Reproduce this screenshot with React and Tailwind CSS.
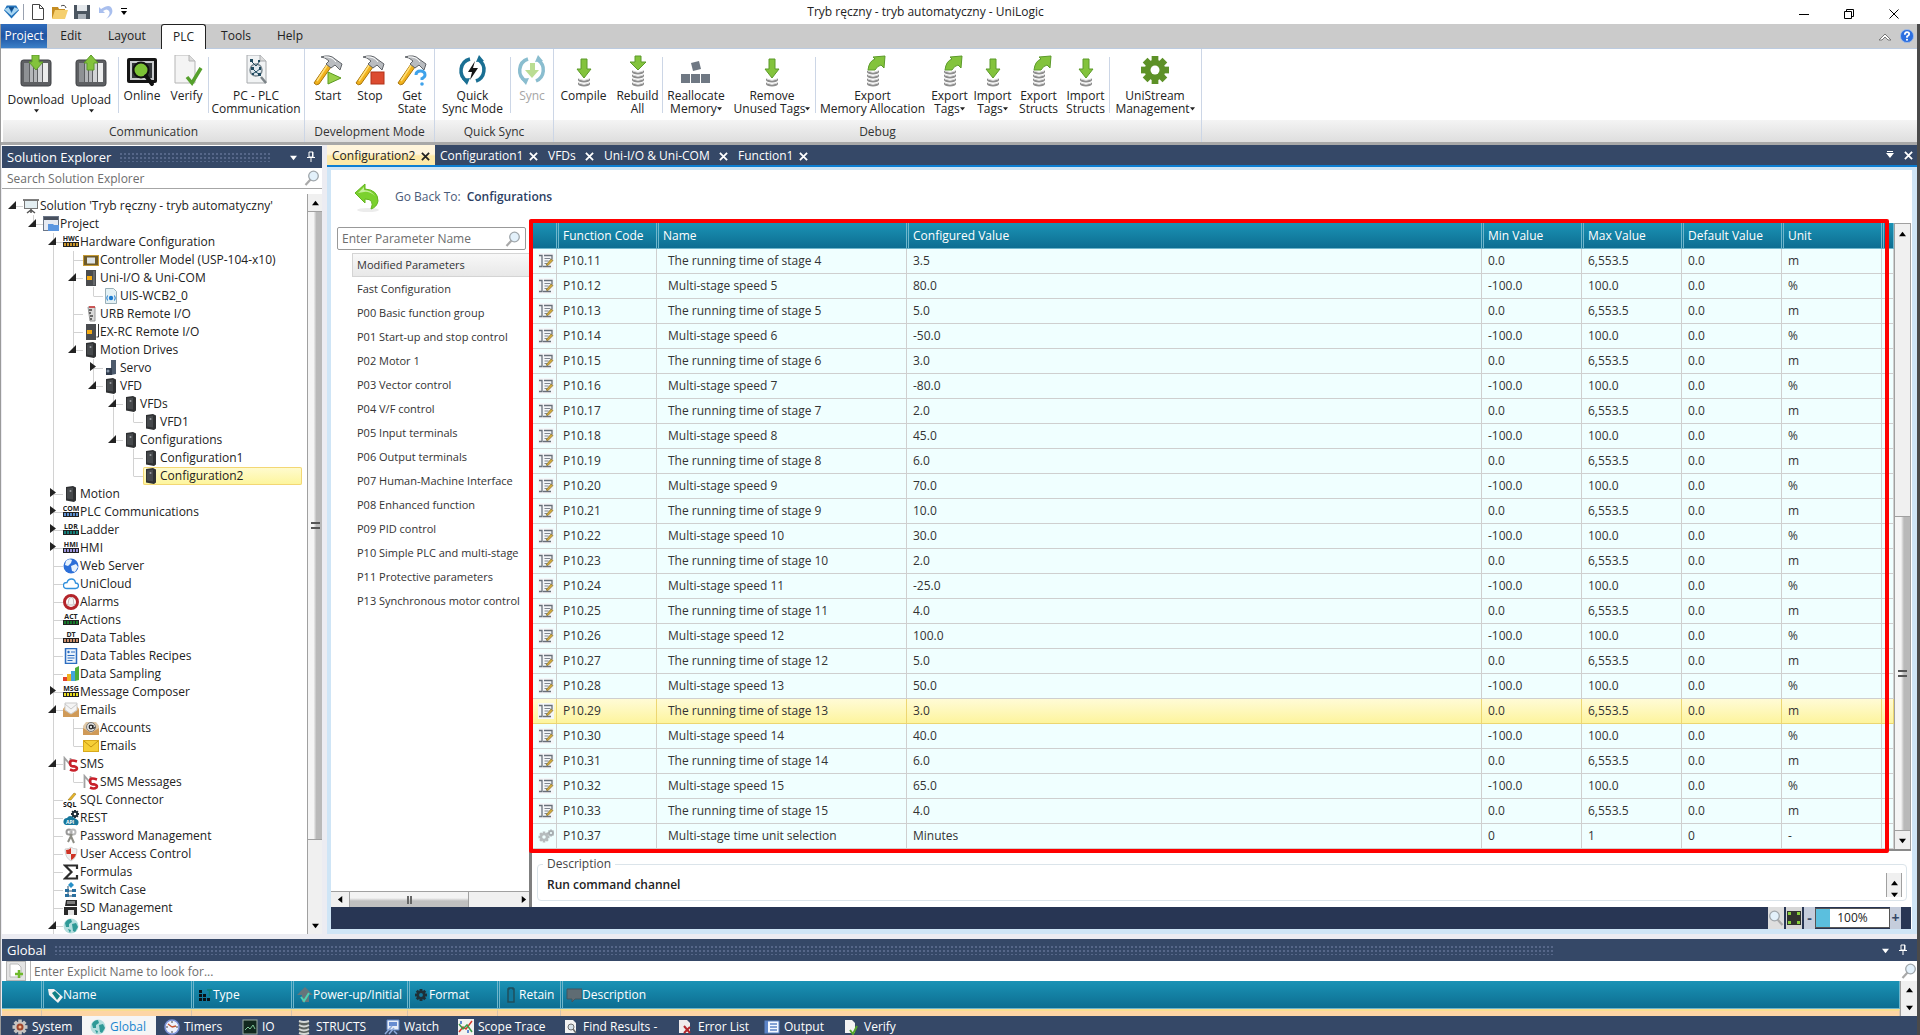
import React, { useState } from 'react'
import clsx from 'clsx'

const TREE = [
  { depth: 0, label: "Solution 'Tryb ręczny - tryb automatyczny'", icon: 'solution', state: 'open' },
  { depth: 1, label: 'Project', icon: 'project', state: 'open' },
  { depth: 2, label: 'Hardware Configuration', icon: 'tag', tag: 'HWC', color: '#c9962c', state: 'open' },
  { depth: 3, label: 'Controller Model (USP-104-x10)', icon: 'controller' },
  { depth: 3, label: 'Uni-I/O & Uni-COM', icon: 'module', state: 'open' },
  { depth: 4, label: 'UIS-WCB2_0', icon: 'page' },
  { depth: 3, label: 'URB Remote I/O', icon: 'urb' },
  { depth: 3, label: 'EX-RC Remote I/O', icon: 'exrc' },
  { depth: 3, label: 'Motion Drives', icon: 'drive', state: 'open' },
  { depth: 4, label: 'Servo', icon: 'servo', state: 'closed' },
  { depth: 4, label: 'VFD', icon: 'drive', state: 'open' },
  { depth: 5, label: 'VFDs', icon: 'drive', state: 'open' },
  { depth: 6, label: 'VFD1', icon: 'drive' },
  { depth: 5, label: 'Configurations', icon: 'drive', state: 'open' },
  { depth: 6, label: 'Configuration1', icon: 'drive' },
  { depth: 6, label: 'Configuration2', icon: 'drive', selected: true },
  { depth: 2, label: 'Motion', icon: 'drive', state: 'closed' },
  { depth: 2, label: 'PLC Communications', icon: 'tag', tag: 'COM', color: '#5b8fd0', state: 'closed' },
  { depth: 2, label: 'Ladder', icon: 'tag', tag: 'LDR', color: '#16807a', state: 'closed' },
  { depth: 2, label: 'HMI', icon: 'tag', tag: 'HMI', color: '#9c94dc', state: 'closed' },
  { depth: 2, label: 'Web Server', icon: 'web' },
  { depth: 2, label: 'UniCloud', icon: 'cloud' },
  { depth: 2, label: 'Alarms', icon: 'alarm' },
  { depth: 2, label: 'Actions', icon: 'tag', tag: 'ACT', color: '#177a2b' },
  { depth: 2, label: 'Data Tables', icon: 'tag', tag: 'DT', color: '#cc8f6c' },
  { depth: 2, label: 'Data Tables Recipes', icon: 'recipe' },
  { depth: 2, label: 'Data Sampling', icon: 'sampling' },
  { depth: 2, label: 'Message Composer', icon: 'tag', tag: 'MSG', color: '#e8dc1e', state: 'closed' },
  { depth: 2, label: 'Emails', icon: 'mailbox', state: 'open' },
  { depth: 3, label: 'Accounts', icon: 'account' },
  { depth: 3, label: 'Emails', icon: 'mail' },
  { depth: 2, label: 'SMS', icon: 'sms', state: 'open' },
  { depth: 3, label: 'SMS Messages', icon: 'sms' },
  { depth: 2, label: 'SQL Connector', icon: 'sql' },
  { depth: 2, label: 'REST', icon: 'rest' },
  { depth: 2, label: 'Password Management', icon: 'keys' },
  { depth: 2, label: 'User Access Control', icon: 'shield' },
  { depth: 2, label: 'Formulas', icon: 'sigma' },
  { depth: 2, label: 'Switch Case', icon: 'switch' },
  { depth: 2, label: 'SD Management', icon: 'sd' },
  { depth: 2, label: 'Languages', icon: 'globe', state: 'open' },
]

const RIBBON = [
  {
    caption: 'Communication',
    className: 'w-[301px] pl-[5px]',
    items: [
      { lines: ['Download'], icon: 'download', width: 'w-14', menu: true },
      { lines: ['Upload'], icon: 'upload', width: 'w-[54px]', menu: true },
      null,
      { lines: ['Online'], icon: 'online', width: 'w-[46px]' },
      { lines: ['Verify'], icon: 'verify', width: 'w-[43px]' },
      null,
      { lines: ['PC - PLC', 'Communication'], icon: 'pcplc', width: 'w-[94px]' },
    ],
  },
  {
    caption: 'Development Mode',
    className: 'w-[129px] pl-0.5',
    items: [
      { lines: ['Start'], icon: 'start', width: 'w-[42px]' },
      { lines: ['Stop'], icon: 'stop', width: 'w-[42px]' },
      { lines: ['Get', 'State'], icon: 'getstate', width: 'w-[42px]' },
    ],
  },
  {
    caption: 'Quick Sync',
    className: 'w-[118px]',
    items: [
      { lines: ['Quick', 'Sync Mode'], icon: 'quicksync', width: 'w-[75px]' },
      null,
      { lines: ['Sync'], icon: 'sync', width: 'w-[42px]', disabled: true },
    ],
  },
  {
    caption: 'Debug',
    className: 'w-[647px]',
    items: [
      { lines: ['Compile'], icon: 'stackdown', width: 'w-[59px]' },
      { lines: ['Rebuild', 'All'], icon: 'stackdowntall', width: 'w-[49px]' },
      null,
      { lines: ['Reallocate', 'Memory'], icon: 'blocks', width: 'w-[66px]', inlineMenu: true },
      { lines: ['Remove', 'Unused Tags'], icon: 'stackdown', width: 'w-[86px]', inlineMenu: true },
      null,
      { lines: ['Export', 'Memory Allocation'], icon: 'stackout', width: 'w-[113px]' },
      { lines: ['Export', 'Tags'], icon: 'stackout', width: 'w-[41px]', inlineMenu: true },
      { lines: ['Import', 'Tags'], icon: 'stackdown', width: 'w-[45px]', inlineMenu: true },
      { lines: ['Export', 'Structs'], icon: 'stackout', width: 'w-[47px]' },
      { lines: ['Import', 'Structs'], icon: 'stackdown', width: 'w-[47px]' },
      null,
      { lines: ['UniStream', 'Management'], icon: 'gear', width: 'w-[90px]', inlineMenu: true },
    ],
  },
]

const EDITOR_TABS = [
  { label: 'Configuration2', width: 'w-[108px]' },
  { label: 'Configuration1', width: 'w-[108px]' },
  { label: 'VFDs', width: 'w-14' },
  { label: 'Uni-I/O & Uni-COM', width: 'w-[134px]' },
  { label: 'Function1', width: 'w-20' },
]

const GROUPS = [
  'Modified Parameters',
  'Fast Configuration',
  'P00 Basic function group',
  'P01 Start-up and stop control',
  'P02 Motor 1',
  'P03 Vector control',
  'P04 V/F control',
  'P05 Input terminals',
  'P06 Output terminals',
  'P07 Human-Machine Interface',
  'P08 Enhanced function',
  'P09 PID control',
  'P10 Simple PLC and multi-stage',
  'P11 Protective parameters',
  'P13 Synchronous motor control',
]

// Starts at P10.11; times and speeds alternate from there.
const VALUES = [
  '3.5', '80.0', '5.0', '-50.0', '3.0', '-80.0', '2.0', '45.0', '6.0', '70.0', '10.0', '30.0',
  '2.0', '-25.0', '4.0', '100.0', '5.0', '50.0', '3.0', '40.0', '6.0', '65.0', '4.0',
]

const PARAMETERS = [
  ...VALUES.map((value, i) => {
    const isTime = i % 2 === 0
    const stage = 4 + Math.ceil(i / 2)
    return {
      code: `P10.${11 + i}`,
      name: isTime ? `The running time of stage ${stage}` : `Multi-stage speed ${stage}`,
      value,
      min: isTime ? '0.0' : '-100.0',
      max: isTime ? '6,553.5' : '100.0',
      def: '0.0',
      unit: isTime ? 'm' : '%',
    }
  }),
  { code: 'P10.37', name: 'Multi-stage time unit selection', value: 'Minutes', min: '0', max: '1', def: '0', unit: '-', gears: true },
]

const SELECTED_CODE = 'P10.29'

const COLUMNS = [
  { label: '', width: 'w-[25px]' },
  { label: 'Function Code', width: 'w-[100px]' },
  { label: 'Name', width: 'w-[250px]' },
  { label: 'Configured Value', width: '' },
  { label: 'Min Value', width: 'w-[100px]' },
  { label: 'Max Value', width: 'w-[100px]' },
  { label: 'Default Value', width: 'w-[100px]' },
  { label: 'Unit', width: 'w-[100px]' },
  { label: '', width: 'w-3' },
]

const GLOBAL_COLUMNS = [
  { label: '', width: 'w-10' },
  { label: 'Name', width: 'w-[150px]', icon: 'label' },
  { label: 'Type', width: 'w-[100px]', icon: 'type' },
  { label: 'Power-up/Initial', width: 'w-[116px]', icon: 'power' },
  { label: 'Format', width: 'w-[90px]', icon: 'format' },
  { label: 'Retain', width: 'w-[63px]', icon: 'retain' },
  { label: 'Description', width: '', icon: 'comment' },
]

const BOTTOM_TABS = [
  { label: 'System', icon: 'system', width: 'w-[78px]' },
  { label: 'Global', icon: 'globe', width: 'w-[74px]', active: true },
  { label: 'Timers', icon: 'clock', width: 'w-[78px]' },
  { label: 'IO', icon: 'scope', width: 'w-[54px]' },
  { label: 'STRUCTS', icon: 'structs', width: 'w-[88px]' },
  { label: 'Watch', icon: 'watch', width: 'w-[74px]' },
  { label: 'Scope Trace', icon: 'trace', width: 'w-[105px]' },
  { label: 'Find Results -', icon: 'find', width: 'w-[115px]' },
  { label: 'Error List', icon: 'error', width: 'w-[86px]' },
  { label: 'Output', icon: 'output', width: 'w-20' },
  { label: 'Verify', icon: 'check', width: 'w-16' },
]

const DOTS = 'bg-[radial-gradient(#566789_0.8px,transparent_1px)] bg-[size:4px_4px]'
const TEAL = 'bg-gradient-to-b from-[#1b93b5] to-[#0c6c90]'

function Gear({ cx, cy, r, fill, hole = '#fff', teeth = 8 }) {
  return (
    <g>
      {Array.from({ length: teeth }, (_, i) => (
        <rect
          key={i}
          x={cx - r * 0.24}
          y={cy - r}
          width={r * 0.48}
          height={r}
          fill={fill}
          transform={`rotate(${(i * 360) / teeth} ${cx} ${cy})`}
        />
      ))}
      <circle cx={cx} cy={cy} r={r * 0.74} fill={fill} />
      <circle cx={cx} cy={cy} r={r * 0.32} fill={hole} />
    </g>
  )
}

function Disks({ from, to = 27 }) {
  const rows = []
  for (let y = to; y >= from; y -= 4) rows.push(y)
  return rows.map((y) => (
    <g key={y}>
      <path d={`M10 ${y}v2a6 2.6 0 0 0 12 0v-2a6 2.200 0 0 1-12 0z`} fill="#8d8d8d" />
      <path d={`M11 ${y + 1}q5 3 10 0`} stroke="#d8d8d8" strokeWidth="1" fill="none" />
    </g>
  ))
}

function Hammer() {
  return (
    <g>
      <path d="M15 9 19 12 7 29Q4 31 2 28z" fill="#f2b21c" stroke="#a8740a" />
      <path d="M16 9 5 26" stroke="#ffe07a" strokeWidth="1.5" />
      <path d="M9 2Q18-1 23 4L30 9 28 15 23 10 19 13 14 9 17 6Q13 2 9 2z" fill="#b9bcc0" stroke="#5f6368" />
      <path d="M12 2q8-1 12 5" stroke="#fff" fill="none" />
    </g>
  )
}

function Cabinet() {
  return (
    <g>
      <rect x="1" y="5" width="30" height="26" rx="2.5" fill="#5d5f62" stroke="#3f4144" />
      <path d="M4 8h5v19H4z" fill="#8e9194" />
      <path d="M10 8h3v19h-3zM14 8h3v19h-3z" fill="#b4b6b9" />
      <path d="M18 8h4v19h-4z" fill="#d2d4d6" />
      <path d="M23 8h5v19h-5z" fill="#eceded" />
    </g>
  )
}

const GREEN = '#83c33c'

const RIBBON_ICONS = {
  download: (
    <>
      <Cabinet />
      <path d="M12 0h7v7h4l-7 8-7-8h3z" fill={GREEN} stroke="#5c9a2a" />
    </>
  ),
  upload: (
    <>
      <Cabinet />
      <path d="M12 15h7V8h4l-7-8-7 8h3z" fill={GREEN} stroke="#5c9a2a" />
    </>
  ),
  online: (
    <>
      <rect x="1" y="3" width="30" height="25" rx="2" fill="#151515" />
      <rect x="4" y="6" width="24" height="19" fill="#c9cbcd" />
      <rect x="6" y="8" width="20" height="15" fill="#33373a" />
      <circle cx="15" cy="15" r="7.5" fill="#7cc236" stroke="#111" strokeWidth="2" />
      <path d="m20 21 6 8" stroke="#111" strokeWidth="4" strokeLinecap="round" />
    </>
  ),
  verify: (
    <>
      <path d="M4 0h14l6 6v22H4z" fill="#f4f4f4" stroke="#b5b5b5" />
      <path d="M18 0v6h6" fill="#dcdcdc" stroke="#b5b5b5" />
      <path d="m16 22 5 6 9-15" fill="none" stroke="#55a02c" strokeWidth="3.5" />
    </>
  ),
  pcplc: (
    <>
      <path d="M7 0h13l6 6v22H7z" fill="#f1f3f4" stroke="#a7aaad" />
      <path d="M20 0v6h6" fill="#dcdcdc" stroke="#a7aaad" />
      <circle cx="16" cy="15" r="6" fill="#dfe8ee" stroke="#7e8b93" strokeWidth="1.5" />
      <path d="m11 6 5 5 4-5M12 13l4 4 5-4M12 19l4-2 4 3" fill="none" stroke="#1f4a5f" />
      <path d="M10 4h3v3h-3zM18 5h2v2h-2zM11 12h3v3h-3zM19 12h2v3h-2zM12 18h2v2h-2zM18 18h3v3h-3z" fill="#1f4a5f" />
      <path d="m21 22 5 6" stroke="#7c8388" strokeWidth="2.5" />
    </>
  ),
  start: (
    <>
      <Hammer />
      <path d="M16 17v12l13-6z" fill="#9ad04a" stroke="#5b9a20" />
    </>
  ),
  stop: (
    <>
      <Hammer />
      <rect x="17" y="17" width="13" height="12" fill="#dc4b30" stroke="#b23219" />
    </>
  ),
  getstate: (
    <>
      <Hammer />
      <path d="M20 20q0-4 4.500-4t4.500 4q0 2-3 3.500V25" fill="none" stroke="#3fa2ea" strokeWidth="3" />
      <circle cx="26" cy="29" r="1.800" fill="#3fa2ea" />
    </>
  ),
  quicksync: (
    <>
      <path d="M13 4A12 12 0 0 0 10 26M19 26A12 12 0 0 0 22 5" fill="none" stroke="#1a6f93" strokeWidth="3.500" />
      <path d="m5 24 8-1-3 7zM27 6l-8 1 3-7z" fill="#1a6f93" />
      <path d="m18 6-7 11h4l-2 8 8-12h-5z" fill="#151515" />
    </>
  ),
  sync: (
    <g opacity="0.55">
      <path d="M12 4A12 12 0 0 0 10 26M20 26A12 12 0 0 0 22 5" fill="none" stroke="#2c88a8" strokeWidth="3.500" />
      <path d="m5 24 8-1-3 7zM27 6l-8 1 3-7z" fill="#2c88a8" />
      <path d="M14 8h5v7h4l-7 8-7-8h5z" fill={GREEN} />
    </g>
  ),
  stackdown: (
    <>
      <Disks from={22} />
      <path d="M13 4h6v10h4l-7 9-7-9h4z" fill={GREEN} stroke="#5c9a2a" />
    </>
  ),
  stackdowntall: (
    <>
      <Disks from={14} />
      <path d="M13 1h6v6h5l-8 8-8-8h5z" fill={GREEN} stroke="#5c9a2a" />
    </>
  ),
  stackout: (
    <>
      <Disks from={14} />
      <path d="M11 15Q12 6 18 4l-2-2 12-1-1 12-3-3q-4 1-6 5z" fill={GREEN} stroke="#5c9a2a" />
    </>
  ),
  blocks: <path d="m11 8 8-2 2 8-8 2zM1 19h9v9H1zM11 19h9v9h-9zM21 19h9v9h-9z" fill="#6f7883" />,
  gear: <Gear cx={16} cy={15} r={14} fill="#5d9127" />,
}

const SMALL_ICONS = {
  solution: (
    <>
      <path d="M0 2h16M8 11v4M4 15l4-3 4 3" stroke="#555" strokeWidth="1.5" fill="none" />
      <rect x="1.500" y="2.500" width="13" height="8" fill="#e3eef2" stroke="#777" />
    </>
  ),
  project: (
    <>
      <rect x="0.500" y="0.500" width="15" height="14" fill="#e6eaf2" stroke="#6b7687" />
      <rect x="1" y="1" width="14" height="3" fill="#48505e" />
      <path d="M5 8h5l1 1h5v6H5z" fill="#5b96e0" />
    </>
  ),
  controller: (
    <>
      <rect x="0.500" y="3.500" width="15" height="10" fill="#6d5a2a" stroke="#c59a35" />
      <rect x="4" y="5.500" width="8" height="6" fill="#dde2e6" />
    </>
  ),
  module: (
    <>
      <rect x="3" y="0" width="10" height="16" fill="#4a4c4f" />
      <rect x="4" y="6" width="5" height="4" fill="#f5ab12" />
      <path d="M11 1v14" stroke="#85888b" />
    </>
  ),
  page: (
    <>
      <path d="M2.500 0.500h8l3 3v12h-11z" fill="#e4f1f5" stroke="#9ab0b8" />
      <circle cx="8" cy="10" r="2.200" fill="#1c7bd0" />
      <path d="M4.500 7.500q-1.500 2.500 0 5M11.500 7.500q1.500 2.500 0 5" fill="none" stroke="#1c7bd0" />
    </>
  ),
  urb: (
    <>
      <path d="M5 1h7v14H7z" fill="#d9d9d9" stroke="#999" />
      <path d="M6 1h6" stroke="#c33" strokeWidth="1.500" />
      <path d="M6 4h3M6 7h2M7 10h3M7 13h2" stroke="#444" strokeWidth="1.500" />
    </>
  ),
  exrc: (
    <>
      <rect x="3" y="0" width="10" height="16" fill="#4a4c4f" />
      <rect x="4" y="6" width="5" height="4" fill="#f5ab12" />
      <path d="M15.500 0v13h-2" stroke="#333" fill="none" />
    </>
  ),
  drive: (
    <>
      <path d="M3 1 10 0l3 1.500v13L11 16l-8-1.500z" fill="#2f3133" />
      <path d="M4 2.500 10 1.500v12L4 12.500z" fill="#46494c" />
      <circle cx="7.500" cy="5" r="1" fill="#9a9da0" />
    </>
  ),
  servo: (
    <>
      <path d="M8 0h5v14l-5 1z" fill="#4c5a6c" />
      <path d="M3 8h6v7H3z" fill="#303c4d" />
      <circle cx="5" cy="11" r="1.500" fill="#8796a8" />
    </>
  ),
  web: (
    <>
      <circle cx="8" cy="8" r="7.500" fill="#2c6fd8" />
      <path d="M3 3q3-3 6-1L8 5 5 8 2 7zM8 8l5-2 2 3-3 5-3-1z" fill="#e7f2fc" />
    </>
  ),
  cloud: <path d="M4 12.500q-3.500 0-3.500-3T4 6.500q1-3.500 4.500-3.500T12.500 7q3 0 3 2.700t-3 2.800z" fill="#fff" stroke="#2f8fdc" strokeWidth="1.300" />,
  alarm: (
    <>
      <circle cx="8" cy="8" r="6.500" fill="#fff" stroke="#b3242a" strokeWidth="3" />
      <path d="M4 11q1.500-1 1.500-4T8 3.500 10.500 7 12 11z" fill="#f5f5f5" stroke="#b6a9a9" strokeWidth="0.800" />
    </>
  ),
  recipe: (
    <>
      <rect x="2.500" y="0.500" width="11" height="15" fill="#e8f1fb" stroke="#2c6dc0" strokeWidth="1.500" />
      <path d="M8 4h4M4.500 7.500h7M4.500 10h7M4.500 12.500h5" stroke="#2c6dc0" />
      <circle cx="5.500" cy="4" r="1.200" fill="#2c6dc0" />
    </>
  ),
  sampling: (
    <>
      <path d="M0 11h4v4H0z" fill="#e2412b" />
      <path d="M4 8h4v7H4z" fill="#f0b323" />
      <path d="M8 5h4v10H8z" fill="#42a4de" />
      <path d="m12 2 4-2v14l-4 1z" fill="#4bad3a" />
    </>
  ),
  mailbox: (
    <>
      <path d="M0 7 3 3h10l3 4v8H0z" fill="#d9a565" />
      <path d="M2 1h12v7l-6 4-6-4z" fill="#f4f4f4" stroke="#c9c9c9" />
      <path d="m2 2 6 5 6-5" fill="none" stroke="#c9c9c9" />
      <path d="m0 8 8 5 8-5v7H0z" fill="#cf9a58" />
    </>
  ),
  account: (
    <>
      <path d="M0 6 3 2h10l3 4v9H0z" fill="#e0c9a8" />
      <path d="m0 8 8 5 8-5v7H0z" fill="#cf9a58" />
      <circle cx="8" cy="7" r="4.500" fill="#ddd" stroke="#777" />
      <circle cx="8" cy="7" r="1.800" fill="none" stroke="#222" strokeWidth="1.200" />
      <path d="M10 5v3q1.500 1.500 2-1" fill="none" stroke="#222" />
    </>
  ),
  mail: (
    <>
      <rect x="0.500" y="2.500" width="15" height="11" fill="#f6cf36" stroke="#d8a91c" />
      <path d="m1 3 7 6 7-6" fill="none" stroke="#c49412" />
    </>
  ),
  sms: (
    <>
      <path d="M1.500 14V2l6 7V2" fill="none" stroke="#a2a2a2" strokeWidth="1.800" />
      <path d="M14 5.500Q7 3 7 7t4 3.200q4 1 2.500 3.300-2.500 2-6.500 0" fill="none" stroke="#c8202a" strokeWidth="2.600" />
    </>
  ),
  sql: (
    <>
      <path d="M5 8 11 1l2 1-5 6z" fill="#e8b52a" stroke="#8f6d10" strokeWidth="0.500" />
      <text x="0" y="15" fontSize="7" fontWeight="bold" fill="#111">SQL</text>
    </>
  ),
  rest: (
    <>
      <Gear cx={12} cy={4} r={4} fill="#1c2c36" />
      <path d="M3 15q-3-1-2.500-4T4 8q2-3 5-1.500T13 9q3 1 2.500 4t-3 2z" fill="#17789c" />
      <text x="3" y="14" fontSize="5" fontWeight="bold" fill="#fff">API</text>
    </>
  ),
  keys: (
    <>
      <circle cx="6" cy="4" r="2.500" fill="none" stroke="#999" strokeWidth="2" />
      <circle cx="10" cy="4" r="2.500" fill="none" stroke="#b9b9b9" strokeWidth="2" />
      <path d="m7 6 4 9M9 6 5 14" stroke="#8d8d85" strokeWidth="2" />
    </>
  ),
  shield: (
    <>
      <path d="M2 3q4 0 6-2 2 2 6 2 0 9-6 12Q2 12 2 3z" fill="#f0f0f0" stroke="#aaa" strokeWidth="0.500" />
      <path d="M3 4q3 0 5-2v6H3.500zM8 8h5q-1 4-5 6z" fill="#cf3325" />
    </>
  ),
  sigma: <path d="M14 5V1.500H2L8.500 8 2 14.500h12V11" fill="none" stroke="#2b2b2b" strokeWidth="2.200" />,
  switch: (
    <>
      <path d="M5 4v10h4M5 9h4" fill="none" stroke="#2b4e6a" />
      <path d="m8 0 3 3-3 3-3-3z" fill="#2790c8" />
      <path d="M2 7h4v3H2zM2 12h4v3H2zM9 7h4v3H9zM9 12h4v3H9z" fill="#2a6f9e" />
    </>
  ),
  sd: (
    <>
      <path d="M3 0h11v6H2zM1 7h13v8H1z" fill="#2a2a2a" />
      <path d="M5 1v3M7 1v3M9 1v3M11 1v3" stroke="#cfcfcf" />
      <rect x="5" y="10" width="6" height="5" fill="#e6e6e6" />
    </>
  ),
  globe: (
    <>
      <circle cx="8" cy="8" r="7.500" fill="#b4dede" />
      <path d="M2 5q2-4 6-4l1 3-3 2v3L3 9zM9 6l4-1 2 4-3 5-2-1zM5 11l3 1-1 3z" fill="#2f9a97" />
    </>
  ),
  label: (
    <>
      <path d="M1 2h6l9 8-5 6-9-8z" fill="#f2f2f2" />
      <path d="m5 6 3-2 5 5-3 4z" fill="#0f7f84" />
    </>
  ),
  type: (
    <>
      <path d="M2 3h3v3H2zM2 7h3v3H2zM2 11h3v3H2zM6 7h3v3H6zM6 11h3v3H6zM10 11h3v3h-3z" fill="#0a1216" />
      <path d="M10 3h5M12.500 3v6" stroke="#0c7f7a" strokeWidth="1.500" />
    </>
  ),
  power: (
    <>
      <path d="m8 0 8 8h-4v7H5V8H0z" fill="#66757b" />
      <path d="m4 10 3 4 5-8" fill="none" stroke="#4fd1b2" strokeWidth="2" />
    </>
  ),
  format: <Gear cx={8} cy={8} r={6} fill="#1e3038" hole="#12799c" />,
  retain: <path d="M5 2h1V1h4v1h1v13H5z" fill="#12799c" stroke="#1f4f5c" strokeWidth="1.500" />,
  comment: <path d="M1 2h15v10H9l-3 3v-3H1z" fill="#5f6c73" stroke="#45555e" />,
  system: (
    <>
      <Gear cx={8} cy={8} r={7.5} fill="#c9c5c2" hole="#a0462c" />
      <circle cx="8" cy="8" r="3.500" fill="#a0462c" />
      <circle cx="8" cy="8" r="1.500" fill="#f3b98d" />
    </>
  ),
  clock: (
    <>
      <circle cx="8" cy="8" r="7" fill="#eef1fb" stroke="#7e93d8" strokeWidth="1.500" />
      <path d="M8 8 4 5M8 8l4-1" stroke="#c5512d" strokeWidth="1.300" />
      <path d="M8 2v2M8 12v2M2 8h2M12 8h2" stroke="#444" />
    </>
  ),
  scope: (
    <>
      <rect x="1" y="1" width="14" height="14" fill="#12291f" stroke="#9aaba2" />
      <path d="m3 11 3-3 2 2 3-4 2 4" fill="none" stroke="#7fc79a" />
    </>
  ),
  structs: (
    <>
      <path d="M3 2v12q5 3 10 0V2z" fill="#5b625e" />
      <path d="M3 2q5 2 10 0M3 6q5 3 10 0M3 10q5 3 10 0M3 14q5 2 10 0" fill="none" stroke="#d5d9d6" strokeWidth="2" />
    </>
  ),
  watch: (
    <>
      <path d="M3 1h12v10H3z" fill="#e8eef8" stroke="#5f83c4" />
      <path d="M5 4h8M5 6h8" stroke="#3c6cc4" strokeWidth="1.500" />
      <path d="m1 15 7-8M5 15l5-6M10 12l3 3" stroke="#8fabdc" strokeWidth="1.500" />
    </>
  ),
  trace: (
    <>
      <rect x="0" y="0" width="16" height="16" fill="#f3f3f0" />
      <path d="m1 13 4-5 3 2 6-8" fill="none" stroke="#d63a2c" strokeWidth="1.500" />
      <path d="m1 5 4 5 4-4 5 7" fill="none" stroke="#3c9c48" strokeWidth="1.500" />
      <path d="M3 2v3M10 11v3" stroke="#3567c4" strokeWidth="1.500" />
    </>
  ),
  find: (
    <>
      <path d="M2 1h8l3 3v10H2z" fill="#f3f3f3" />
      <circle cx="8" cy="8" r="3" fill="#d7e2ea" stroke="#6d6d6d" />
      <path d="m10 10 3 4" stroke="#6d6d6d" strokeWidth="1.500" />
    </>
  ),
  error: (
    <>
      <path d="M1 1h8l3 3v10H1z" fill="#f0ecec" />
      <path d="m6 7 6 7M12 8l-6 6" stroke="#b3262b" strokeWidth="2" />
    </>
  ),
  output: (
    <>
      <rect x="1" y="2" width="14" height="12" fill="#f4f8ff" stroke="#5c84c8" />
      <path d="M1 2h3v12H1z" fill="#5c84c8" />
      <path d="M6 5h7M6 8h7M6 11h7" stroke="#5c84c8" strokeWidth="1.500" />
    </>
  ),
  check: (
    <>
      <path d="M1 1h7l3 3v10H1z" fill="#f3f3f3" />
      <path d="m6 11 3 4 4-8" fill="none" stroke="#57a52e" strokeWidth="2" />
    </>
  ),
  edit: (
    <>
      <rect x="0" y="0" width="16" height="16" fill="#f4f6f8" />
      <path d="M1 2.500h3v11H1M6 2.500h8v4M5 13.500h8" fill="none" stroke="#68707a" strokeWidth="1.300" />
      <path d="M6.500 5.500h6M6.500 8h4M6.500 10.500h3" stroke="#7f8791" />
      <path d="m8 12 5-6 2 1.500-5 5z" fill="#d5ac3c" stroke="#6d5a20" strokeWidth="0.600" />
    </>
  ),
  gears: (
    <>
      <Gear cx={6} cy={9} r={5.5} fill="#b5bbbd" hole="#f0ffff" />
      <Gear cx={13} cy={5} r={3.5} fill="#a6adb0" hole="#f0ffff" />
    </>
  ),
}

function SmallIcon({ name, tag, color, className }) {
  if (name === 'tag') {
    return (
      <svg viewBox="0 0 16 16" className={clsx('h-4 w-4 shrink-0', className)} aria-hidden="true">
        <text x="8" y="7" fontSize="7" fontWeight="bold" textAnchor="middle" fill="#222">{tag}</text>
        <rect x="0" y="8" width="16" height="5" fill="#222" />
        <path d="M1 10.500h14" stroke={color} strokeWidth="3" strokeDasharray="2 1" />
      </svg>
    )
  }
  return (
    <svg viewBox="0 0 16 16" className={clsx('h-4 w-4 shrink-0', className)} aria-hidden="true">
      {SMALL_ICONS[name]}
    </svg>
  )
}

function Magnifier({ className }) {
  return (
    <svg viewBox="0 0 16 16" className={clsx('h-4 w-4 shrink-0', className)} aria-hidden="true">
      <path d="M6.500 9.500 1.500 15" stroke="#a9a9a9" strokeWidth="2.200" />
      <circle cx="9.500" cy="6" r="4.800" fill="#e3f1fb" stroke="#9fa6ab" strokeWidth="1.300" />
    </svg>
  )
}

function Triangle({ direction = 'down', className }) {
  const d = {
    down: 'M0 2h8L4 7z',
    up: 'M0 7h8L4 2z',
    left: 'M6 0v8L1 4z',
    right: 'M2 0v8l5-4z',
  }[direction]
  return (
    <svg viewBox="0 0 8 8" className={clsx('shrink-0 fill-current', className)} aria-hidden="true">
      <path d={d} />
    </svg>
  )
}

function Pin() {
  return (
    <svg viewBox="0 0 10 12" className="h-3 w-2.5 fill-none stroke-white" aria-hidden="true">
      <path d="M3 1h4v5H3zM1 6.500h8M5 7v4M6.500 1v5" />
    </svg>
  )
}

function PanelHeader({ title, dotsClass, pinClass }) {
  return (
    <div className="flex h-[22px] shrink-0 items-center bg-[#354867] pl-[5px] text-white">
      <h2 className="text-[13px] leading-5">{title}</h2>
      <div className={clsx('ml-2 h-2.5 grow', DOTS, dotsClass)} />
      <button type="button" aria-label={`${title} options`} className="flex h-5 w-4 items-center justify-center">
        <Triangle className="h-[7px] w-[7px]" />
      </button>
      <button type="button" aria-label={`Pin ${title}`} className={clsx('flex h-5 w-5 items-center justify-center', pinClass)}>
        <Pin />
      </button>
    </div>
  )
}

function ScrollButton({ direction, label, className }) {
  return (
    <button type="button" aria-label={label} className={clsx('flex shrink-0 items-center justify-center bg-[#f0f0f0] text-black', className)}>
      <Triangle direction={direction} className="h-[7px] w-[7px]" />
    </button>
  )
}

function TitleBar() {
  return (
    <header className="flex h-6 shrink-0 items-center bg-white">
      <div className="flex w-32 items-center">
        <svg viewBox="0 0 16 16" className="ml-1 h-4 w-4" aria-hidden="true">
          <path d="M3 1h10l3 5-8 9-8-9z" fill="#2272ba" />
          <path d="m0 5 5-2 3 6 3-6 5 2-8 7z" fill="#a9d6f2" />
          <path d="m5 3 3 4 3-4z" fill="#124a86" />
        </svg>
        <span className="ml-1 h-4 border-l border-gray-400" />
        <button type="button" aria-label="New" className="ml-1.5">
          <svg viewBox="0 0 16 16" className="h-4 w-4">
            <path d="M2.500 0.500h7l4 4v11h-11z" fill="#fff" stroke="#444" />
            <path d="M9.500 0.500v4h4" fill="none" stroke="#444" />
          </svg>
        </button>
        <button type="button" aria-label="Open" className="ml-1.5">
          <svg viewBox="0 0 16 16" className="h-4 w-4">
            <path d="M0 3h6l1 2h6v9H0z" fill="#c58d22" />
            <path d="m0 15 3-9h13l-3 9z" fill="#f5cf6e" />
            <path d="M9 2q4-2 5 2" fill="none" stroke="#444" />
          </svg>
        </button>
        <button type="button" aria-label="Save" className="ml-1.5">
          <svg viewBox="0 0 16 16" className="h-4 w-4">
            <path d="M0 1h16v14H0z" fill="#4a5560" />
            <path d="M3 1h10v6H3z" fill="#e4e8ec" />
            <path d="M4 10h8v5H4z" fill="#aab2ba" />
          </svg>
        </button>
        <button type="button" aria-label="Undo" className="ml-2">
          <svg viewBox="0 0 16 16" className="h-4 w-4">
            <path d="M1 3v6h6L5 7q4-3 6 0t-3 8q8-4 6-10T3 5z" fill="#a9bfee" />
          </svg>
        </button>
        <button type="button" aria-label="Customize toolbar" className="ml-1.5 text-black">
          <svg viewBox="0 0 8 8" className="h-2 w-2 fill-current">
            <path d="M1 0h6v1H1zM1 3h6L4 7z" />
          </svg>
        </button>
      </div>
      <h1 className="grow pr-[62px] text-center text-[12px] leading-5 text-[#222]">Tryb ręczny - tryb automatyczny - UniLogic</h1>
      <div className="flex w-[135px] items-center">
        {[
          ['Minimize', 'M0 5.500h10'],
          ['Restore', 'M.500 2.500h7v7h-7zM2.500 2.500v-2h7v7h-2'],
          ['Close', 'M.500.500l9 9M9.500.500l-9 9'],
        ].map(([label, d]) => (
          <button key={label} type="button" aria-label={label} className="flex h-6 w-[45px] items-center justify-center pt-1 pr-2">
            <svg viewBox="0 0 10 10" className="h-2.5 w-2.5 fill-none stroke-black">
              <path d={d} />
            </svg>
          </button>
        ))}
      </div>
    </header>
  )
}

function MenuBar() {
  return (
    <nav className="flex h-[25px] shrink-0 items-stretch border-b border-[#bccbe0] bg-[#cbcbcb] text-[12px] text-[#222]">
      <button type="button" className="w-[46px] bg-gradient-to-b from-[#2f6cbb] via-[#1f54a3] to-[#3c80c8] text-white">Project</button>
      <button type="button" className="w-12">Edit</button>
      <button type="button" className="w-16">Layout</button>
      <button type="button" aria-current="page" className="-mb-px ml-0.5 w-[45px] rounded-t-[3px] border border-b-0 border-[#222] bg-white">PLC</button>
      <button type="button" className="w-[60px]">Tools</button>
      <button type="button" className="w-12">Help</button>
      <div className="grow" />
      <button type="button" aria-label="Collapse ribbon" className="mr-2">
        <svg viewBox="0 0 14 9" className="h-[9px] w-3.5">
          <path d="m1 8 6-6 6 6h-3L7 5 4 8z" fill="#fff" stroke="#777" />
        </svg>
      </button>
      <button type="button" aria-label="Help" className="mr-[3px]">
        <svg viewBox="0 0 16 16" className="h-3.5 w-3.5">
          <circle cx="8" cy="8" r="7.500" fill="#2c6fe0" stroke="#9fbce8" />
          <path d="M5.500 6.500q0-3 2.500-3t2.500 2.300Q10.500 7.500 8 8.500V10" fill="none" stroke="#fff" strokeWidth="2" />
          <circle cx="8" cy="12.300" r="1.200" fill="#fff" />
        </svg>
      </button>
    </nav>
  )
}

function RibbonItem({ item }) {
  const [first, second] = item.lines
  return (
    <button
      type="button"
      disabled={item.disabled}
      className={clsx('flex shrink-0 flex-col items-center pt-1.5 text-[12px] leading-[13px] whitespace-nowrap', item.width, item.disabled ? 'text-[#a5a5a5]' : 'text-[#222]')}
    >
      <svg viewBox="0 0 32 32" className={clsx('w-8 shrink-0', item.menu ? 'h-[38px]' : 'h-[34px]')} preserveAspectRatio="xMidYMin meet" aria-hidden="true">
        {RIBBON_ICONS[item.icon]}
      </svg>
      <span>{first}</span>
      {second ? (
        <span className="flex items-center">
          {second}
          {item.inlineMenu ? <Triangle className="h-[5px] w-[5px]" /> : null}
        </span>
      ) : null}
      {item.menu ? <Triangle className="mt-0.5 h-[5px] w-[5px]" /> : null}
    </button>
  )
}

function Ribbon() {
  return (
    <div className="flex h-24 shrink-0 border-b-[3px] border-[#a8a8a8] bg-white pl-0.5">
      {RIBBON.map((group) => (
        <section key={group.caption} aria-label={group.caption} className="flex shrink-0 flex-col border-r border-[#ccd6e6]">
          <div className={clsx('flex h-[71px]', group.className)}>
            {group.items.map((item, i) =>
              item ? <RibbonItem key={item.lines.join(' ')} item={item} /> : <span key={i} className="mt-2 h-14 w-px shrink-0 bg-[#ccd6e6]" />,
            )}
          </div>
          <div className="h-[22px] bg-gradient-to-b from-[#f4f4f4] to-[#dedede] text-center text-[12px] leading-6 text-[#333]">{group.caption}</div>
        </section>
      ))}
      <div className="flex grow flex-col justify-end">
        <div className="h-[22px] bg-gradient-to-b from-[#f4f4f4] to-[#dedede]" />
      </div>
    </div>
  )
}

// True when a later sibling exists at the given depth, so the guide line goes on.
function continues(index, depth) {
  for (let i = index + 1; i < TREE.length; i++) {
    if (TREE[i].depth < depth) return false
    if (TREE[i].depth === depth) return true
  }
  return false
}

function TreeRow({ node, index }) {
  const goesOn = node.depth > 0 && (continues(index, node.depth) || index === TREE.length - 1)
  return (
    <div
      role="treeitem"
      aria-level={node.depth + 1}
      aria-expanded={node.state ? node.state === 'open' : undefined}
      aria-selected={!!node.selected}
      className="flex h-[18px] shrink-0 items-center"
    >
      {Array.from({ length: node.depth }, (_, level) => (
        <span key={level} className="flex h-full w-5 shrink-0 justify-center">
          {level > 0 && continues(index, level) ? <span className="h-full w-px bg-[#d2d2d2]" /> : null}
        </span>
      ))}
      <svg viewBox="0 0 20 18" className="h-[18px] w-5 shrink-0" aria-hidden="true">
        <path d={`M10.500 9.500H20${node.depth > 0 ? 'M10.500 0V9' : ''}${goesOn ? 'M10.500 9V18' : ''}`} stroke="#d2d2d2" fill="none" />
        {node.state === 'open' ? <path d="M13 4v8H5z" fill="#222" /> : null}
        {node.state === 'closed' ? <path d="M7 3v9l6-4.500z" fill="#222" /> : null}
      </svg>
      <span
        className={clsx(
          'flex h-[18px] items-center whitespace-nowrap',
          node.selected && 'mr-[5px] grow rounded-xs bg-gradient-to-b from-[#fffbd0] to-[#fdf59a] ring-1 ring-[#f3d774] ring-inset',
        )}
      >
        <SmallIcon name={node.icon} tag={node.tag} color={node.color} />
        <span className="pl-px text-[#222]">{node.label}</span>
      </span>
    </div>
  )
}

function SolutionExplorer() {
  return (
    <aside className="flex w-80 shrink-0 flex-col bg-white pt-px">
      <PanelHeader title="Solution Explorer" dotsClass="mr-[14px]" pinClass="mr-px" />
      <label className="flex h-[21px] shrink-0 items-center border-b border-[#a6a6a6] pr-0.5 pl-[5px]">
        <input
          type="text"
          aria-label="Search Solution Explorer"
          placeholder="Search Solution Explorer"
          className="min-w-0 grow pt-0.5 text-[12px] leading-4 outline-none placeholder:text-[#6d6d6d]"
        />
        <Magnifier />
      </label>
      <div className="flex min-h-0 grow pt-[5px]">
        <div role="tree" aria-label="Solution" className="flex min-w-0 grow flex-col overflow-hidden pt-[3px] pl-px text-[12px]">
          {TREE.map((node, i) => (
            <TreeRow key={i} node={node} index={i} />
          ))}
        </div>
        <div className="flex w-[15px] shrink-0 flex-col border-l border-[#a0a0a0] bg-[#f0f0f0]">
          <ScrollButton direction="up" label="Scroll tree up" className="h-[18px] border-b border-[#a0a0a0]" />
          <div className="flex h-[628px] items-center justify-center border-b border-[#a0a0a0] bg-gradient-to-r from-[#f5f5f5] from-40% to-[#b9b9b9] to-60%">
            <span className="h-[7px] w-[9px] border-y-2 border-[#555]" />
          </div>
          <div className="grow" />
          <ScrollButton direction="down" label="Scroll tree down" className="h-[18px]" />
        </div>
      </div>
    </aside>
  )
}

function EditorTabs() {
  const [active, setActive] = useState('Configuration2')
  return (
    <div className="flex h-[22px] shrink-0 items-stretch border-b-2 border-[#0d7fd3] bg-[#354867] text-[12px]">
      {EDITOR_TABS.map((tab) => (
        <div
          key={tab.label}
          className={clsx(
            'flex shrink-0 items-center justify-between px-[5px] pt-0.5',
            tab.width,
            tab.label === active ? 'bg-gradient-to-b from-[#fff5dc] from-45% to-[#fde9a8] to-55% text-[#222]' : 'text-white',
          )}
        >
          <button type="button" onClick={() => setActive(tab.label)} className="whitespace-nowrap">
            {tab.label}
          </button>
          <button type="button" aria-label={`Close ${tab.label}`}>
            <svg viewBox="0 0 10 10" className="h-[9px] w-[9px] fill-none stroke-current stroke-2">
              <path d="m1 1 8 8M9 1 1 9" />
            </svg>
          </button>
        </div>
      ))}
      <div className="grow" />
      <button type="button" aria-label="Open documents" className="mr-2.5 text-white">
        <svg viewBox="0 0 8 8" className="h-2 w-2 fill-current">
          <path d="M1 0h6v1H1zM0 2h8L4 7z" />
        </svg>
      </button>
      <button type="button" aria-label="Close document" className="mr-1 text-white">
        <svg viewBox="0 0 10 10" className="h-[9px] w-[9px] fill-none stroke-current stroke-2">
          <path d="m1 1 8 8M9 1 1 9" />
        </svg>
      </button>
    </div>
  )
}

function ParameterGroups() {
  return (
    <div className="flex w-[198px] shrink-0 flex-col pt-[7px]">
      <label className="mr-[3px] ml-1.5 flex h-[23px] items-center rounded-xs border border-[#999] px-1">
        <input
          type="text"
          aria-label="Enter Parameter Name"
          placeholder="Enter Parameter Name"
          className="min-w-0 grow text-[12px] outline-none placeholder:text-[#6d6d6d]"
        />
        <Magnifier />
      </label>
      <ul className="mt-[3px] min-h-0 grow overflow-hidden pl-[21px] text-[11px] text-[#333]">
        {GROUPS.map((group, i) => (
          <li key={group}>
            <button
              type="button"
              className={clsx(
                'h-6 w-full overflow-hidden border border-r-0 pl-1 text-left whitespace-nowrap',
                i === 0 ? 'border-[#d4d4d4] bg-gradient-to-b from-[#f8f8f8] to-[#e8e8e8]' : 'border-transparent',
              )}
            >
              {group}
            </button>
          </li>
        ))}
      </ul>
      <div className="flex h-4 shrink-0 border-t border-[#a0a0a0] bg-[#f0f0f0]">
        <ScrollButton direction="left" label="Scroll left" className="w-[18px]" />
        <div className="flex w-[120px] items-center justify-center border-x border-[#a0a0a0] bg-gradient-to-b from-[#f3f3f3] from-40% to-[#c0c0c0] to-60%">
          <span className="h-2 w-[5px] border-x-2 border-[#666]" />
        </div>
        <div className="grow" />
        <ScrollButton direction="right" label="Scroll right" className="w-3" />
      </div>
    </div>
  )
}

function ParameterTable() {
  return (
    <table className="w-full table-fixed border-separate border-spacing-0 text-[12px] text-[#333]">
      <thead>
        <tr className={TEAL}>
          {COLUMNS.map((col, i) => (
            <th key={i} className={clsx('h-[26px] p-0 text-left font-normal text-white', col.width)}>
              <div className="flex h-[26px] items-center border-r border-b border-[#6fb6cc]">
                <span className={clsx('h-full', i > 0 && 'ml-px border-l border-[#6fb6cc]')} />
                <span className="pl-1 whitespace-nowrap">{col.label}</span>
              </div>
            </th>
          ))}
        </tr>
      </thead>
      <tbody>
        {PARAMETERS.map((row) => {
          const selected = row.code === SELECTED_CODE
          const cell = clsx('h-[25px] overflow-hidden border-r border-b p-0 pl-1.5 whitespace-nowrap', selected ? 'border-[#ecd672]' : 'border-[#cfcfcf]')
          return (
            <tr key={row.code} className={selected ? 'bg-gradient-to-b from-[#fffbd6] to-[#fdf49a]' : 'bg-[#f0ffff]'}>
              <td className={cell}>
                <SmallIcon name={row.gears ? 'gears' : 'edit'} />
              </td>
              <td className={cell}>{row.code}</td>
              <td className={cell}>
                <span className="pl-[5px]">{row.name}</span>
              </td>
              <td className={cell}>{row.value}</td>
              <td className={cell}>{row.min}</td>
              <td className={cell}>{row.max}</td>
              <td className={cell}>{row.def}</td>
              <td className={cell}>{row.unit}</td>
              <td className={cell} />
            </tr>
          )
        })}
      </tbody>
    </table>
  )
}

function StatusBar() {
  return (
    <div className="mr-px flex h-[22px] shrink-0 items-center justify-end bg-[#283654]">
      <button type="button" aria-label="Zoom preview" className="h-[22px] w-4 bg-[#dedede]">
        <Magnifier className="-scale-x-100" />
      </button>
      <button type="button" aria-label="Fit to window" className="ml-0.5 flex h-[22px] w-4 items-center bg-[#d6d6d6]">
        <svg viewBox="0 0 16 16" className="h-4 w-4">
          <path d="M1 1h14v14H1z" fill="#30332e" />
          <path d="M2 2h3v3H2zM11 2h3v3h-3zM2 11h3v3H2zM11 11h3v3h-3z" fill="#86cf3a" />
        </svg>
      </button>
      <button type="button" aria-label="Zoom out" className="ml-0.5 h-[22px] w-[11px] bg-[#c5cddc] text-[14px] leading-5 font-bold text-[#354867]">-</button>
      <div className="flex h-5 w-[75px] items-center border border-[#555] bg-white">
        <span className="h-full w-3.5 bg-[#5bbfde]" />
        <output aria-label="Zoom" className="grow pr-3.5 text-center text-[12px] text-[#222]">100%</output>
      </div>
      <button type="button" aria-label="Zoom in" className="mr-2.5 h-[22px] w-[11px] bg-[#c5cddc] text-[14px] leading-5 font-bold text-[#354867]">+</button>
    </div>
  )
}

function Editor() {
  return (
    <main className="flex min-w-0 grow flex-col">
      <EditorTabs />
      <div className="flex min-h-0 grow flex-col border-4 border-t-[3px] border-r-[5px] border-b-[5px] border-[#cfe5f6] bg-white">
        <div className="flex h-[50px] shrink-0 items-center pt-1 pl-[22px]">
          <button type="button" aria-label="Back" className="mr-3">
            <svg viewBox="0 0 30 30" className="h-[30px] w-[30px]">
              <ellipse cx="15" cy="28" rx="11" ry="2" fill="#ececec" />
              <path d="m2 11 10-9v5q13 1 13 12-1 6-7 8 4-10-6-10v4z" fill="#7bd12e" stroke="#62b41f" />
              <path d="m5 11 6-6v3q7 0 11 6-6-5-11-4z" fill="#c6f09b" />
            </svg>
          </button>
          <span className="text-[12px] text-[#4a5a78]">Go Back To:</span>
          <a href="#configurations" className="ml-1.5 text-[12px] font-semibold text-[#2c3e63]">Configurations</a>
        </div>
        <div className="flex min-h-0 grow">
          <ParameterGroups />
          <div className="w-[3px] shrink-0 bg-[#7f7f7f]" />
          <div className="flex min-w-0 grow flex-col">
            <div className="relative mt-[3px] mr-px flex shrink-0 border-b-2 border-[#8a8a8a]">
              <div className="min-w-0 grow">
                <ParameterTable />
              </div>
              <div className="flex w-[17px] shrink-0 flex-col border border-b-0 border-[#a0a0a0] bg-[#f0f0f0]">
                <ScrollButton direction="up" label="Scroll table up" className="h-[18px]" />
                <div className="grow" />
                <div className="flex h-[315px] items-center justify-center border-y border-[#a0a0a0] bg-gradient-to-r from-[#f5f5f5] from-40% to-[#b9b9b9] to-60%">
                  <span className="h-[7px] w-[9px] border-y-2 border-[#555]" />
                </div>
                <ScrollButton direction="down" label="Scroll table down" className="h-[18px]" />
              </div>
              <div className="pointer-events-none absolute -top-1 right-[22px] -bottom-1 -left-[3px] rounded-xs border-4 border-[#ff0000]" />
            </div>
            <div className="flex min-h-0 grow flex-col px-[5px] pt-1">
              <fieldset className="flex h-[46px] items-center rounded-sm border border-[#dbe4ea] pr-1 pl-[9px]">
                <legend className="-ml-1 px-1 text-[12px] leading-[18px] text-[#444]">Description</legend>
                <p className="grow text-[12px] leading-6 font-semibold text-[#222]">Run command channel</p>
                <div className="flex h-6 w-4 flex-col border-x border-[#a0a0a0]">
                  <ScrollButton direction="up" label="Scroll description up" className="h-[18px]" />
                  <ScrollButton direction="down" label="Scroll description down" className="h-1.5 overflow-hidden" />
                </div>
              </fieldset>
            </div>
          </div>
        </div>
        <StatusBar />
      </div>
    </main>
  )
}

function GlobalPanel() {
  return (
    <section aria-label="Global" className="ml-px flex shrink-0 flex-col bg-white">
      <PanelHeader title="Global" dotsClass="mr-[323px]" pinClass="mr-1" />
      <div className="flex h-5 items-center pl-1">
        <button type="button" aria-label="Add tag" className="h-5 w-5 border border-[#b5b5b5] bg-[#e3e3e3]">
          <svg viewBox="0 0 18 18" className="h-[18px] w-[18px]">
            <path d="M3 2h8l3 3v10H3z" fill="#fff" stroke="#bbb" />
            <path d="M12 8v8M8 12h8" stroke="#6fb92c" strokeWidth="2.500" />
          </svg>
        </button>
        <input
          type="text"
          aria-label="Enter Explicit Name to look for"
          placeholder="Enter Explicit Name to look for..."
          className="ml-1 h-5 min-w-0 grow border-l border-[#b5b5b5] pl-[3px] text-[12px] outline-none placeholder:text-[#6d6d6d]"
        />
        <Magnifier />
      </div>
      <div className="flex">
        <div className="min-w-0 grow">
          <table className="w-full table-fixed border-separate border-spacing-0 text-[12px]">
            <thead>
              <tr className={TEAL}>
                {GLOBAL_COLUMNS.map((col, i) => (
                  <th key={i} className={clsx('h-7 p-0 text-left font-normal text-white', col.width)}>
                    <div className="flex h-7 items-center border-r border-b border-[#6fb6cc]">
                      <span className={clsx('h-full', i > 0 && 'ml-px border-l border-[#6fb6cc]')} />
                      {col.icon ? <SmallIcon name={col.icon} className="ml-[3px]" /> : null}
                      <span className="whitespace-nowrap">{col.label}</span>
                    </div>
                  </th>
                ))}
              </tr>
            </thead>
            <tbody>
              <tr className="bg-[#fdd5a5]">
                {GLOBAL_COLUMNS.map((col, i) => (
                  <td key={i} className="h-[7px] border-t-2 border-r border-t-[#f8dd90] border-r-[#d8c4ac] p-0" />
                ))}
              </tr>
            </tbody>
          </table>
        </div>
        <div className="flex w-[17px] shrink-0 flex-col border-l border-[#a0a0a0] bg-[#f0f0f0]">
          <ScrollButton direction="up" label="Scroll tags up" className="grow" />
          <ScrollButton direction="down" label="Scroll tags down" className="grow" />
        </div>
      </div>
    </section>
  )
}

function BottomTabs() {
  return (
    <nav className="flex h-[19px] shrink-0 items-stretch bg-[#354867] pl-[3px] text-[12px]">
      {BOTTOM_TABS.map((tab) => (
        <button
          key={tab.label}
          type="button"
          aria-current={tab.active ? 'page' : undefined}
          className={clsx('flex shrink-0 items-center gap-1 pt-0.5 pl-2 whitespace-nowrap', tab.width, tab.active ? 'bg-[#f5f5f5] text-[#1c86cf]' : 'text-white')}
        >
          <SmallIcon name={tab.icon} />
          {tab.label}
        </button>
      ))}
    </nav>
  )
}

export default function App() {
  return (
    <div className="flex h-screen flex-col overflow-hidden bg-white font-['Open_Sans','Noto_Sans',sans-serif]">
      <TitleBar />
      <div className="flex min-h-0 grow flex-col border-r-[3px] border-l border-r-[#4a4a4a] border-l-[#9a9a9a] bg-[#ececf2]">
        <MenuBar />
        <Ribbon />
        <div className="mb-[5px] ml-px flex min-h-0 grow gap-[5px]">
          <SolutionExplorer />
          <Editor />
        </div>
        <GlobalPanel />
        <BottomTabs />
      </div>
    </div>
  )
}
